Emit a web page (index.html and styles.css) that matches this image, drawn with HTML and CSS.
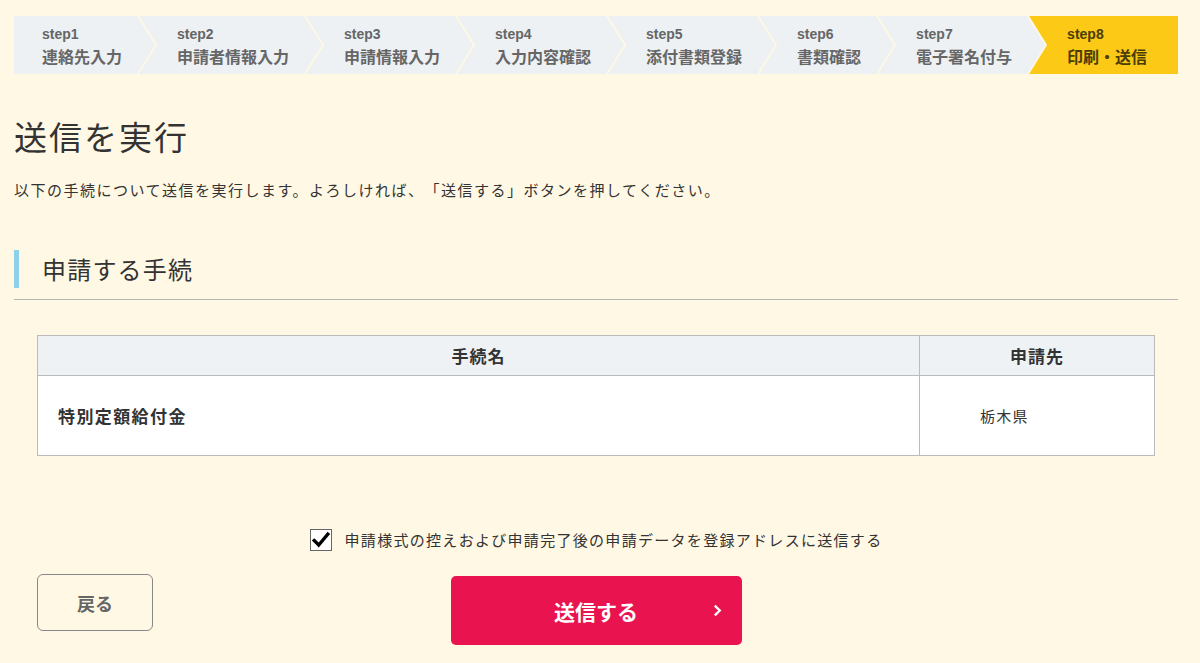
FILE: index.html
```html
<!DOCTYPE html>
<html lang="ja">
<head>
<meta charset="utf-8">
<title>送信を実行</title>
<link rel="stylesheet" href="styles.css">
</head>
<body>
<div class="page">
  <ol class="steps">
    <li class="step first"><span class="num">step1</span><span class="label">連絡先入力</span></li>
    <li class="step"><span class="num">step2</span><span class="label">申請者情報入力</span></li>
    <li class="step"><span class="num">step3</span><span class="label">申請情報入力</span></li>
    <li class="step"><span class="num">step4</span><span class="label">入力内容確認</span></li>
    <li class="step"><span class="num">step5</span><span class="label">添付書類登録</span></li>
    <li class="step"><span class="num">step6</span><span class="label">書類確認</span></li>
    <li class="step"><span class="num">step7</span><span class="label">電子署名付与</span></li>
    <li class="step current last"><span class="num">step8</span><span class="label">印刷・送信</span></li>
  </ol>

  <h1 class="title">送信を実行</h1>
  <p class="lead">以下の手続について送信を実行します。よろしければ、「送信する」ボタンを押してください。</p>

  <div class="section-head">
    <h2 class="section-title">申請する手続</h2>
  </div>

  <table class="proc-table">
    <thead>
      <tr><th class="col-name">手続名</th><th class="col-dest">申請先</th></tr>
    </thead>
    <tbody>
      <tr><td class="cell-name">特別定額給付金</td><td class="cell-dest">栃木県</td></tr>
    </tbody>
  </table>

  <label class="check-row">
    <span class="checkbox">
      <svg viewBox="0 0 22 22" width="20" height="20"><path d="M3.5 11.5 L8.5 16.5 L18.5 4.5" fill="none" stroke="#000" stroke-width="3.6" stroke-linecap="square" stroke-linejoin="miter"/></svg>
    </span>
    <span class="check-text">申請様式の控えおよび申請完了後の申請データを登録アドレスに送信する</span>
  </label>

  <div class="actions">
    <div class="back-cell"><button class="btn-back" type="button">戻る</button></div>
    <button class="btn-send" type="button">
      <span class="send-text">送信する</span>
      <svg class="send-arrow" viewBox="0 0 10 14" width="9" height="13"><polyline points="2,1.5 7.5,7 2,12.5" fill="none" stroke="#fff" stroke-width="2.6"/></svg>
    </button>
    <div></div>
  </div>
</div>
</body>
</html>
```

FILE: styles.css
```css
* { box-sizing: border-box; }
html, body { margin: 0; padding: 0; }
body {
  background: #fff8e4;
  font-family: "Noto Sans CJK JP", "Noto Sans", sans-serif;
  color: #333;
  width: 1200px;
  height: 663px;
  overflow: hidden;
  text-spacing-trim: space-all;
}
.page {
  padding: 16px 22px 0 14px;
}
.steps {
  list-style: none;
  margin: 0;
  padding: 0;
  display: flex;
  height: 58px;
}
.step {
  display: flex;
  flex-direction: column;
  justify-content: center;
  background: #edf1f4;
  color: #666;
  font-weight: bold;
  padding: 0 33px 0 38px;
  margin-left: -16px;
  clip-path: polygon(0 0, calc(100% - 18px) 0, 100% 50%, calc(100% - 18px) 100%, 0 100%, 18px 50%);
}
.step.first {
  margin-left: 0;
  padding-left: 28px;
  clip-path: polygon(0 0, calc(100% - 18px) 0, 100% 50%, calc(100% - 18px) 100%, 0 100%);
}
.step.last {
  flex: 1;
  padding-right: 10px;
  clip-path: polygon(0 0, 100% 0, 100% 100%, 0 100%, 18px 50%);
}
.step.current {
  background: #fbc916;
  color: #4a3d05;
}
.num {
  font-family: "Liberation Sans", Arial, sans-serif;
  font-size: 14px;
  line-height: 22px;
  font-weight: bold;
}
.label {
  font-size: 16px;
  line-height: 22px;
  white-space: nowrap;
}
.title {
  margin: 42px 0 0;
  font-size: 33px;
  line-height: 40px;
  letter-spacing: 2px;
  font-weight: normal;
  color: #333;
}
.lead {
  margin: 24px 0 0;
  font-size: 15px;
  line-height: 20px;
  letter-spacing: 1.5px;
}
.section-head {
  margin-top: 50px;
  padding-bottom: 11px;
  border-bottom: 1px solid #b5b5b5;
}
.section-title {
  margin: 0;
  border-left: 5px solid #8fd0ea;
  padding-left: 23px;
  height: 38px;
  font-size: 24px;
  line-height: 38px;
  letter-spacing: 1.2px;
  font-weight: normal;
  color: #333;
}
.proc-table {
  margin: 35px 23px 0;
  width: calc(100% - 46px);
  border-collapse: collapse;
  font-size: 16px;
}
.proc-table th {
  background: #eff2f4;
  border: 1px solid #bbb;
  height: 40px;
  font-size: 17px;
  letter-spacing: 1px;
  font-weight: bold;
  text-align: center;
  color: #333;
  padding: 0;
}
.col-dest { width: 235px; }
.proc-table td {
  background: #fff;
  border: 1px solid #bbb;
  height: 80px;
  padding: 0;
}
.cell-name {
  padding-left: 20px !important;
  font-size: 17px;
  letter-spacing: 1.4px;
  font-weight: bold;
}
.cell-dest {
  padding-left: 60px !important;
  font-size: 15px;
  letter-spacing: 1.2px;
}
.check-row {
  margin-top: 73px;
  display: flex;
  justify-content: center;
  align-items: center;
  gap: 13px;
}
.checkbox {
  width: 22px;
  height: 22px;
  background: #fff;
  border: 1px solid #666;
  display: flex;
  align-items: center;
  justify-content: center;
}
.check-text {
  font-size: 15px;
  line-height: 22px;
  letter-spacing: 1.3px;
  color: #333;
}
.actions {
  margin-top: 23px;
  display: grid;
  grid-template-columns: 1fr 291px 1fr;
  align-items: start;
}
.back-cell { padding-left: 23px; }
.btn-back {
  width: 116px;
  height: 57px;
  background: transparent;
  border: 1.5px solid #888;
  border-radius: 6px;
  font-family: inherit;
  font-size: 18px;
  font-weight: bold;
  color: #666;
}
.btn-send {
  margin-top: 2px;
  height: 69px;
  background: #e8134f;
  border: none;
  border-radius: 5px;
  color: #fff;
  font-family: inherit;
  font-size: 21px;
  font-weight: bold;
  display: flex;
  align-items: center;
  justify-content: center;
  position: relative;
}
.send-arrow {
  position: absolute;
  right: 20px;
  top: 28px;
}
```
